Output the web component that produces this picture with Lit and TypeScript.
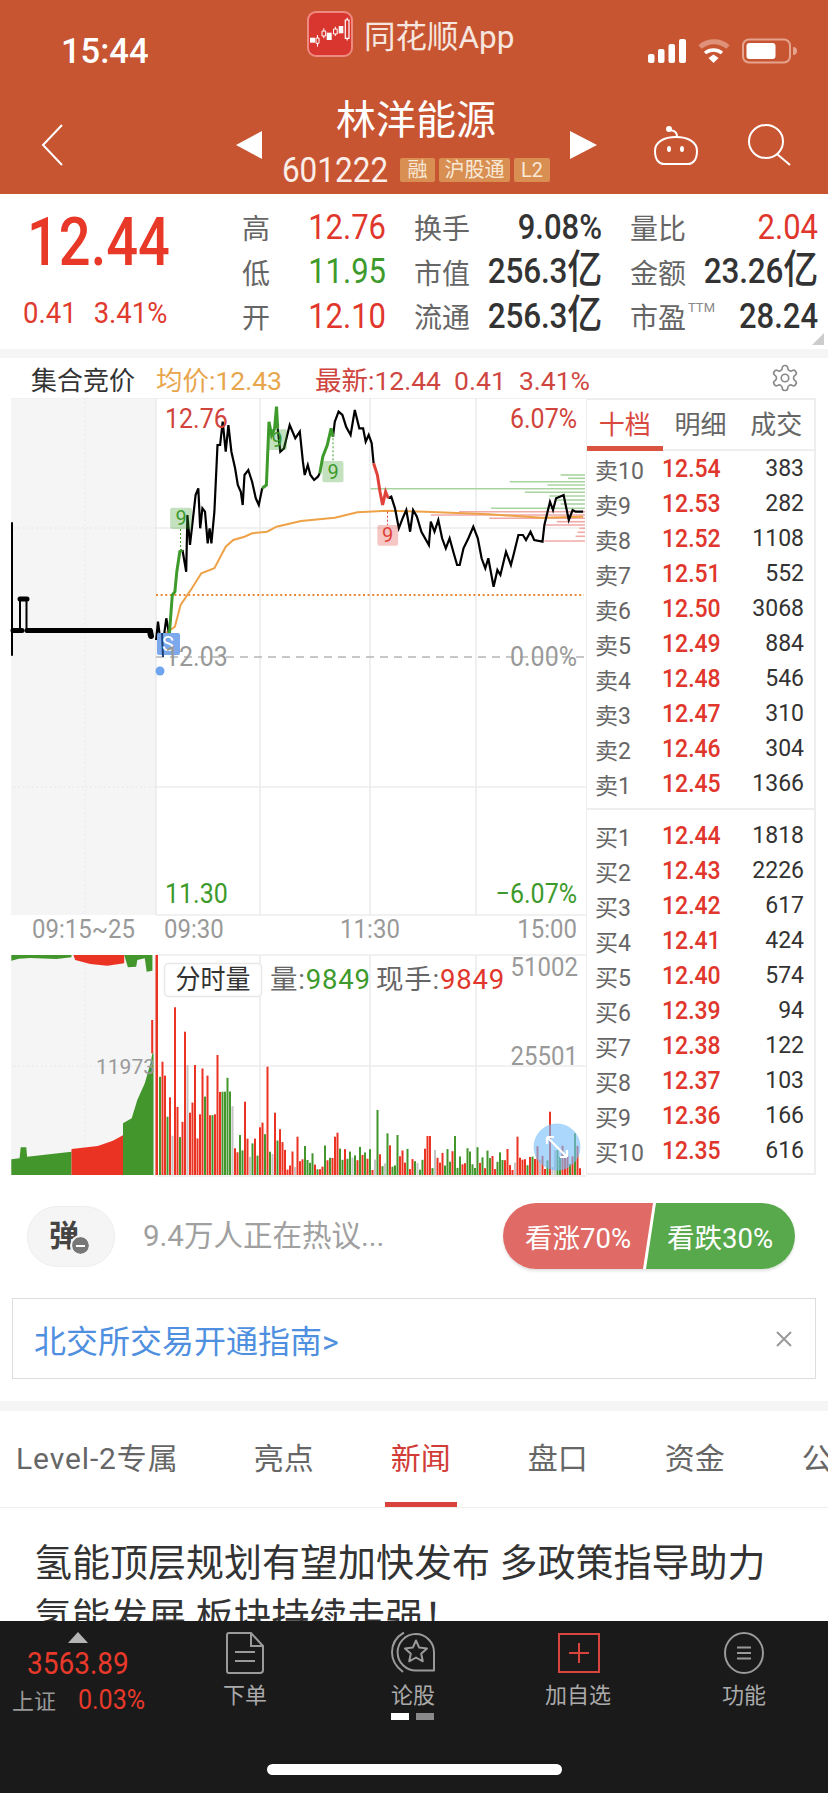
import { LitElement, html, css, svg } from "lit";
import { customElement } from "lit/decorators.js";

const X = (z: number) => +(z / 2.658).toFixed(1);
const Y1 = (z: number) => +(395 + z / 3).toFixed(1);
const Y2 = (z: number) => +(950 + z / 3).toFixed(1);
const pts = (a: number[][]) => a.map(([x, y]) => `${X(x)},${Y1(y)}`).join(" ");

const lineA = [[415,735],[420,680],[430,770],[442,670],[450,720]];
const green1 = [[450,720],[458,600],[465,590],[470,530],[478,470],[485,465]];
const lineB = [[485,465],[495,530],[498,360],[505,450],[520,300],[527,280],[532,400],[538,340],[545,350],[552,445],[557,400],[562,445],[570,350],[578,150],[585,150],[592,80],[600,170],[607,90],[615,170],[625,220],[632,270],[640,290],[645,330],[650,240],[660,225],[670,260],[680,310],[688,330],[697,280]];
const green2 = [[697,280],[708,270],[715,80],[722,120],[730,100],[735,35],[738,100]];
const lineC = [[738,100],[745,170],[755,160],[770,90],[785,130],[797,110],[805,200],[810,240],[818,210],[825,240],[835,255],[845,245],[850,235]];
const green3 = [[850,235],[858,185],[870,150],[880,100],[885,125]];
const lineD = [[885,125],[890,80],[900,50],[910,60],[920,95],[932,120],[943,45],[955,100],[965,100],[972,140],[980,120],[988,145],[993,205]];
const red1 = [[993,205],[1003,240],[1010,290],[1017,330],[1025,290],[1032,310]];
const lineE = [[1032,310],[1040,305],[1050,340],[1060,400],[1070,370],[1080,345],[1090,410],[1098,345],[1108,365],[1120,410],[1140,450],[1145,380],[1155,410],[1165,375],[1175,430],[1185,460],[1195,430],[1205,470],[1215,510],[1222,510],[1232,460],[1245,430],[1258,395],[1270,430],[1280,490],[1290,520],[1298,490],[1312,575],[1322,525],[1330,540],[1345,470],[1358,510],[1365,480],[1378,420],[1390,420],[1398,435],[1410,410],[1420,435],[1442,440],[1447,390],[1462,320],[1470,345],[1478,310],[1488,305],[1498,300],[1512,375],[1522,345],[1530,350],[1550,350]];
const avg = [[440,715],[465,695],[480,630],[510,580],[535,535],[570,520],[600,455],[620,435],[650,425],[670,415],[710,410],[735,395],[800,378],[890,368],[950,352],[1030,347],[1130,350],[1300,358],[1440,368],[1550,365]];
const depth: [number, number, string][] = [[240,1490,"g"],[250,1510,"g"],[260,1355,"g"],[270,1455,"g"],[281,985,"g"],[292,1395,"g"],[303,1460,"g"],[315,1480,"g"],[327,1490,"g"],[340,1305,"g"],[350,1220,"r"],[360,1145,"r"],[370,1300,"r"],[380,1480,"r"],[390,1450,"r"],[400,1540,"r"],[412,1535,"r"],[424,1530,"r"],[438,1447,"r"]];

const peaks: [number, number, string][] = [[432,335,"r"],[465,172,"r"],[490,245,"r"],[498,345,"x"],[517,345,"r"],[575,315,"r"],[587,320,"r"],[592,425,"g"],[650,455,"r"],[710,350,"r"],[727,488,"r"],[790,560,"r"],[885,560,"r"],[895,548,"r"],[1000,480,"g"],[1025,550,"g"],[1055,555,"g"],[1137,558,"r"],[1205,558,"g"],[1370,560,"r"],[1460,485,"r"],[1525,550,"g"],[1545,548,"g"]];

function makeBars() {
  let s = 17;
  const rnd = () => { s = (s * 9301 + 49297) % 233280; return s / 233280; };
  const out: { x: number; y: number; c: string }[] = [];
  for (let i = 0; i < 169; i++) {
    const x = 159 + i * 2.5;
    const zx = x * 2.658;
    const r = rnd(), k = rnd();
    let h = zx < 620 ? 90 + r * 230 : zx < 760 ? 50 + r * 110 : 15 + r * 75;
    let c = k < 0.45 ? "#ea3323" : k < 0.92 ? "#43962c" : "#c4c4c4";
    let t = 675 - h;
    for (const p of peaks) if (Math.abs(p[0] - zx) < 3.4) { t = p[1]; c = p[2] === "r" ? "#ea3323" : p[2] === "g" ? "#43962c" : "#c4c4c4"; }
    out.push({ x, y: Y2(t), c });
  }
  return out;
}
const bars = makeBars();

const sells = [["卖10","12.54","383"],["卖9","12.53","282"],["卖8","12.52","1108"],["卖7","12.51","552"],["卖6","12.50","3068"],["卖5","12.49","884"],["卖4","12.48","546"],["卖3","12.47","310"],["卖2","12.46","304"],["卖1","12.45","1366"]];
const buys = [["买1","12.44","1818"],["买2","12.43","2226"],["买3","12.42","617"],["买4","12.41","424"],["买5","12.40","574"],["买6","12.39","94"],["买7","12.38","122"],["买8","12.37","103"],["买9","12.36","166"],["买10","12.35","616"]];

const tx = (x: number, cy: number, t: string, cls: string, anchor = "start") =>
  svg`<text x=${x} y=${cy} class=${cls} text-anchor=${anchor} dominant-baseline="central">${t}</text>`;
const mark = (zx0: number, zy0: number, zx1: number, zy1: number, bg: string, fg: string, t: string, lx: number, ly: number, ly2: number) => svg`
  <line x1=${X(lx)} y1=${Y1(ly)} x2=${X(lx)} y2=${Y1(ly2)} stroke=${fg} stroke-width="1" stroke-dasharray="2 2"></line>
  <rect x=${X(zx0)} y=${Y1(zy0)} width=${X(zx1 - zx0)} height=${(zy1 - zy0) / 3} rx="2" fill=${bg}></rect>
  <text x=${X((zx0 + zx1) / 2)} y=${Y1((zy0 + zy1) / 2)} fill=${fg} class="mk" text-anchor="middle" dominant-baseline="central">${t}</text>`;

@customElement("app-root")
export class AppRoot extends LitElement {
  static styles = css`
    :host { display: block; width: 828px; height: 1793px; overflow: hidden; background: #fff;
      font-family: Roboto, "Noto Sans CJK SC", sans-serif; color: #333; }
    .page { display: flex; flex-direction: column; height: 1793px; }
    .header { height: 194px; background: #c85532; color: #fff; flex: none; }
    .status { display: flex; height: 72px; padding-left: 61px; }
    .time { margin-top: 33px; font-size: 34.5px; font-weight: 500; line-height: 36px; width: 89px; white-space: nowrap; }
    .app { display: flex; align-items: center; gap: 11px; margin: 11px 0 0 157px; height: 46px; }
    .app span { font-size: 31.5px; color: #f6e6df; margin-top: -1px; }
    .sys { margin: 37px 0 0 auto; padding-right: 30px; display: flex; }
    .nav { display: flex; align-items: center; height: 122px; padding: 24px 0 0 41px; box-sizing: border-box; }
    .tl { margin-left: 173px; }
    .mid { width: 308px; display: flex; flex-direction: column; align-items: center; }
    .name { font-size: 40px; line-height: 50px; font-weight: 400; }
    .sub { display: flex; align-items: center; height: 48px; }
    .code { font-size: 31.5px; transform: scaleY(1.1); margin-right: 12px; color: #fbeee9; }
    .tag { height: 24px; line-height: 24px; background: #d98e52; color: #f8e9d6; font-size: 20px; border-radius: 2px; text-align: center; margin-right: 4px; }
    .tag.a { width: 35px; } .tag.b { width: 71px; } .tag.c { width: 36px; margin-right: 0; }
    .robot { margin-left: 56px; } .search { margin-left: 49px; }

    .quote { flex: none; height: 155px; box-sizing: border-box; display: flex; position: relative; }
    .corner { position: absolute; right: 4px; bottom: 4px; width: 0; height: 0; border-left: 12px solid transparent; border-bottom: 12px solid #ccc; }
    .left { width: 242px; flex: none; position: relative; }
    .price { position: absolute; left: 27px; top: 10px; font-size: 56px; font-weight: 500; color: #e83828; line-height: 78px; transform: scaleY(1.18); }
    .chg { position: absolute; left: 23px; top: 102px; font-size: 27.5px; color: #e03a2e; line-height: 34px; display: flex; gap: 17px; transform: scaleY(1.08); }
    .stats { display: grid; grid-template-columns: 144px 188px 188px; column-gap: 28px; grid-auto-rows: 44.5px; padding-top: 11px; }
    .cell { display: flex; justify-content: space-between; align-items: center; }
    .lb { font-size: 28px; color: #666; white-space: nowrap; }
    .lb sup { font-size: 13px; font-family: Roboto; color: #888; vertical-align: 16px; line-height: 0; margin-left: 2px; }
    .val { font-size: 31px; display: inline-block; transform: scaleY(1.13); white-space: nowrap; }
    .val.r { color: #e0362c; } .val.g { color: #3d9a2b; } .val.k { color: #333; font-weight: 500; }
    .val.w { font-size: 31.5px; letter-spacing: -.2px; }
    .val small { font-size: 35px; font-family: "Noto Sans CJK SC"; font-weight: 500; line-height: 0; }
    .strip { flex: none; height: 9px; background: #f5f5f5; }
    .ctitle { flex: none; height: 40px; display: flex; align-items: center; padding-left: 31px; font-size: 26.5px; position: relative; white-space: nowrap; }
    .ctitle .t1 { width: 125px; color: #333; font-size: 26px; }
    .ctitle .t2 { width: 159px; color: #e8a64c; }
    .ctitle .t3 { color: #cf4640; }
    .gear { position: absolute; left: 770px; top: 5px; }

    .charts { flex: none; height: 777px; display: flex; }
    .plot { width: 586px; height: 782px; flex: none; }
    .plot text { font-family: Roboto, "Noto Sans CJK SC", sans-serif; }
    .p25, .p24 { transform-box: fill-box; transform-origin: center; transform: scaleY(1.1); }
    .p25 { font-size: 25px; } .p24 { font-size: 24px; } .p21 { font-size: 21px; } .p28 { font-size: 27.5px; letter-spacing: .8px; }
    .fr { fill: #d0443c; } .fg { fill: #3d9a2b; } .fa { fill: #999; } .fh { fill: #333; } .fs { fill: #666; } .fn { fill: #e0362c; }
    .mk { font-size: 20px; }
    .book { width: 230px; box-sizing: border-box; border: 2px solid #eee; border-left: 1px solid #eee; flex: none; display: flex; flex-direction: column; height: 777px; }
    .btabs { display: flex; height: 49px; border-bottom: 2px solid #eee; flex: none; }
    .btabs div { flex: 1; text-align: center; font-size: 26px; line-height: 50px; color: #666; position: relative; }
    .btabs .on { color: #d9483e; }
    .btabs .on::after { content: ""; position: absolute; left: 0; right: 0; bottom: -2px; height: 5px; background: #d9533f; }
    .rows { display: flex; flex-direction: column; }
    .row { height: 35px; display: grid; grid-template-columns: 67px 70px 72px; padding-left: 8px; align-items: center; }
    .row .a { font-size: 23px; color: #666; white-space: nowrap; }
    .row .b { font-size: 23px; font-weight: 500; color: #e0362c; display: inline-block; transform: scaleY(1.1); }
    .row .c { font-size: 23px; color: #333; text-align: right; display: inline-block; transform: scaleY(1.06); }
    .sep { height: 9px; border-bottom: 2px solid #eee; flex: none; margin-bottom: 8px; box-sizing: border-box; }

    .senti { flex: none; height: 95px; display: flex; padding-top: 28px; box-sizing: border-box; position: relative; }
    .dan { margin: 3px 0 0 27px; width: 88px; height: 61px; background: #f5f5f5; border: 1px solid #eee; border-radius: 30px; box-sizing: border-box; position: relative; display: flex; align-items: center; justify-content: center; }
    .dan b { font-size: 30px; color: #444; margin: -8px 14px 0 0; }
    .dan i { position: absolute; left: 44px; top: 30px; width: 17px; height: 17px; box-sizing: border-box; border-radius: 50%; background: #777; outline: 2px solid #f5f5f5; display: flex; align-items: center; justify-content: center; }
    .dan i::before { content: ""; width: 9px; height: 2px; background: #fff; }
    .hot { margin: 13px 0 0 28px; width: 360px; font-size: 29.5px; line-height: 40px; color: #a0a0a0; white-space: nowrap; }
    .pill { position: absolute; left: 503px; top: 28px; width: 292px; height: 66px; border-radius: 33px; overflow: hidden; display: flex; box-shadow: 0 2px 3px rgba(0,0,0,.12); }
    .pill span { display: flex; align-items: center; justify-content: center; color: #fff; font-size: 27.5px; white-space: nowrap; }
    .up { width: 150px; flex: none; background: #e06a65; clip-path: polygon(0 0, 100% 0, 140px 100%, 0 100%); }
    .down { width: 150px; flex: none; margin-left: -8px; background: #58a94c; clip-path: polygon(11px 0, 100% 0, 100% 100%, 1px 100%); }
    .banner { flex: none; margin: 28px 12px 0; height: 81px; box-sizing: border-box; border: 1px solid #ddd; display: flex; align-items: center; justify-content: space-between; padding: 0 22px 0 21px; }
    .banner span { font-size: 32px; color: #4f8fdf; }
    .strip2 { flex: none; height: 10px; margin-top: 22px; background: #f5f5f5; }
    .tabs { flex: none; height: 97px; display: flex; gap: 77px; padding-left: 16px; border-bottom: 1px solid #eee; box-sizing: border-box; overflow: hidden; }
    .tabs div { font-size: 30px; line-height: 96px; color: #666; white-space: nowrap; position: relative; flex: none; }
    .tabs .lv { letter-spacing: .9px; margin-right: -2px; }
    .tabs .on { color: #d23c36; }
    .tabs .on::after { content: ""; position: absolute; left: -6px; right: -6px; bottom: 0; height: 5px; background: #d9433b; }
    .article { flex: 1; min-height: 0; overflow: hidden; padding: 28px 0 0 34px; font-size: 38px; line-height: 54px; color: #333; white-space: nowrap; }

    .bar { flex: none; height: 172px; background: #1a1a1a; display: grid; grid-template-columns: 160px 170px 166px 164px 168px; position: relative; }
    .idx { display: flex; flex-direction: column; align-items: flex-start; padding: 11px 0 0 12px; }
    .tri { width: 0; height: 0; border-left: 10px solid transparent; border-right: 10px solid transparent; border-bottom: 11px solid #b5b5b5; margin-left: 56px; }
    .ip { font-size: 28px; color: #e8392a; line-height: 32px; margin: 5px 0 0 15px; transform: scaleY(1.1); }
    .il { display: flex; align-items: center; margin-top: 3px; width: 133px; justify-content: space-between; }
    .il span { font-size: 22px; color: #999; }
    .il em { font-style: normal; font-size: 25px; color: #e8392a; transform: scaleY(1.12); }
    .it { display: flex; flex-direction: column; align-items: center; padding-top: 11px; }
    .it svg { display: block; }
    .it span { font-size: 22px; line-height: 30px; color: #aaa; margin-top: 7px; white-space: nowrap; }
    .plus { margin-left: 2px; }
    .dots { position: absolute; left: 391px; top: 92px; display: flex; gap: 7px; }
    .dots i { width: 18px; height: 7px; background: #fff; }
    .dots i + i { background: #8a8a8a; }
    .home { position: absolute; left: 267px; top: 143px; width: 295px; height: 11px; border-radius: 6px; background: #fff; }
  `;

  private renderPlot() {
    const grid = "#ececec";
    return svg`
      <svg class="plot" width="586" height="782" viewBox="0 398 586 782">
        <rect x="11" y="398" width="145" height="517" fill="#f5f5f5"></rect>
        <rect x="11" y="955" width="145" height="220" fill="#f5f5f5"></rect>
        <line x1="85" x2="85" y1="398" y2="915" stroke="#e6e6e6" stroke-dasharray="1.5 3"></line>
        <line x1="85" x2="85" y1="955" y2="1175" stroke="#e6e6e6" stroke-dasharray="1.5 3"></line>
        ${[528, 787, 1066].map((y) => svg`<line x1="14" x2="156" y1=${y} y2=${y} stroke="#e2e2e2" stroke-dasharray="1.5 3"></line>`)}
        ${[398, 528, 787, 915, 955, 1066, 1176].map((y) => svg`<line x1="156" x2="586" y1=${y} y2=${y} stroke=${grid} stroke-width="1.6"></line>`)}
        ${[156, 260, 370, 476].map((x) => svg`<line x1=${x} x2=${x} y1="398" y2="915" stroke=${grid} stroke-width="1.6"></line><line x1=${x} x2=${x} y1="955" y2="1176" stroke=${grid} stroke-width="1.6"></line>`)}
        <line x1="11" x2="156" y1="398" y2="398" stroke=${grid}></line>

        ${depth.map(([y, x, c]) => svg`<line x1=${X(x)} x2="585" y1=${Y1(y)} y2=${Y1(y)} stroke=${c === "g" ? "#a9d4a0" : "#efa9a7"} stroke-width="1.6"></line>`)}
        <line x1="156" x2="584" y1=${Y1(600)} y2=${Y1(600)} stroke="#e8893c" stroke-width="2" stroke-dasharray="2 2.6"></line>
        <line x1="156" x2="586" y1="657" y2="657" stroke="#b5b5b5" stroke-width="1.5" stroke-dasharray="8 6"></line>

        <g stroke="#000" fill="none" stroke-linecap="round">
          <line x1="12" x2="12" y1="523" y2="655" stroke-width="2"></line>
          <line x1="13" x2="22" y1="630.5" y2="630.5" stroke-width="5"></line>
          <line x1="27" x2="150" y1="630.5" y2="630.5" stroke-width="5"></line>
          <line x1="20" x2="20" y1="600" y2="630" stroke-width="2"></line>
          <line x1="26.5" x2="26.5" y1="600" y2="630" stroke-width="2"></line>
          <line x1="20" x2="27" y1="599" y2="599" stroke-width="5"></line>
          <line x1="150" x2="151" y1="631" y2="636" stroke-width="6"></line>
        </g>
        <polyline points=${pts(avg)} fill="none" stroke="#eea247" stroke-width="2"></polyline>
        ${[lineA, lineB, lineC, lineD, lineE].map((l) => svg`<polyline points=${pts(l)} fill="none" stroke="#000" stroke-width="2.2"></polyline>`)}
        ${[green1, green2, green3].map((l) => svg`<polyline points=${pts(l)} fill="none" stroke="#3d9a2b" stroke-width="3"></polyline>`)}
        <polyline points=${pts(red1)} fill="none" stroke="#e0423a" stroke-width="3"></polyline>

        ${mark(452,338,510,402,"rgba(61,154,43,.3)","#3d9a2b","9",480,402,465)}
        ${mark(710,103,763,165,"rgba(61,154,43,.3)","#3d9a2b","9",736,103,103)}
        ${mark(857,198,913,262,"rgba(61,154,43,.3)","#3d9a2b","9",885,130,198)}
        ${mark(1003,390,1058,452,"rgba(224,66,58,.3)","#e0423a","9",1030,350,390)}
        <rect x="157" y="633" width="23" height="22" rx="2" fill="#7ba9ec"></rect>
        <line x1="162" y1="633" x2="163" y2="657" stroke="#1d3f78" stroke-width="2"></line>
        <text x="168" y="644" class="mk" fill="#fff" text-anchor="middle" dominant-baseline="central">S</text>
        <circle cx="160" cy="671" r="4.5" fill="#6fa5ee"></circle>

        ${tx(165, 419, "12.76", "p25 fr")}
        ${tx(577, 419, "6.07%", "p25 fr", "end")}
        ${tx(165, 657, "12.03", "p25 fa")}
        ${tx(577, 657, "0.00%", "p25 fa", "end")}
        ${tx(165, 894, "11.30", "p25 fg")}
        ${tx(577, 894, "−6.07%", "p25 fg", "end")}
        ${tx(32, 929, "09:15~25", "p24 fa")}
        ${tx(164, 929, "09:30", "p24 fa")}
        ${tx(370, 929, "11:30", "p24 fa", "middle")}
        ${tx(577, 929, "15:00", "p24 fa", "end")}

        <polygon points=${[[30,675],[30,628],[52,625],[55,592],[70,592],[72,620],[190,605],[190,675]].map(([x,y])=>`${X(x)},${Y2(y)}`).join(" ")} fill="#43962c"></polygon>
        <polygon points=${[[190,675],[190,597],[260,588],[300,572],[327,556],[327,675]].map(([x,y])=>`${X(x)},${Y2(y)}`).join(" ")} fill="#ea3323"></polygon>
        <polygon points=${[[327,675],[327,520],[350,505],[365,450],[385,400],[400,340],[405,310],[408,310],[408,675]].map(([x,y])=>`${X(x)},${Y2(y)}`).join(" ")} fill="#43962c"></polygon>
        <rect x=${X(402)} y=${Y2(210)} width="2" height=${(310-210)/3} fill="#ea3323"></rect>
        <polygon points=${[[30,15],[190,15],[190,22],[150,27],[80,24],[50,26],[30,32]].map(([x,y])=>`${X(x)},${Y2(y)}`).join(" ")} fill="#43962c"></polygon>
        <polygon points=${[[195,15],[330,15],[330,40],[285,47],[240,42],[200,30]].map(([x,y])=>`${X(x)},${Y2(y)}`).join(" ")} fill="#ea3323"></polygon>
        <polygon points=${[[330,15],[405,15],[405,62],[390,65],[385,25],[365,30],[362,50],[340,52]].map(([x,y])=>`${X(x)},${Y2(y)}`).join(" ")} fill="#43962c"></polygon>
        <rect x="155.5" y="955" width="2.5" height="220" fill="#ea3323"></rect>
        ${bars.map((b) => svg`<rect x=${b.x} y=${b.y} width="2" height=${1175 - b.y} fill=${b.c}></rect>`)}
        <circle cx="557" cy="1147" r="23.5" fill="rgba(120,190,250,.62)"></circle>
        <path d="M547 1137l20 20M547 1137h7M547 1137v7M567 1157h-7M567 1157v-7" stroke="#fff" stroke-width="2.2" fill="none"></path>

        ${tx(96, 1067, "11973", "p21 fa")}
        ${tx(578, 967, "51002", "p24 fa", "end")}
        ${tx(578, 1056, "25501", "p24 fa", "end")}
        <rect x="164.5" y="963.5" width="97" height="33" rx="4" fill="#fff" stroke="#e8e8e8" stroke-width="1.5"></rect>
        ${tx(213, 980, "分时量", "p25 fh", "middle")}
        <text x="270" y="979" class="p28" dominant-baseline="central"><tspan class="fs">量:</tspan><tspan class="fg">9849</tspan></text>
        <text x="376" y="979" class="p28" dominant-baseline="central"><tspan class="fs">现手:</tspan><tspan class="fn">9849</tspan></text>
      </svg>`;
  }

  private row(r: string[]) {
    return html`<div class="row"><span class="a">${r[0]}</span><span class="b">${r[1]}</span><span class="c">${r[2]}</span></div>`;
  }

  render() {
    return html`<div class="page">
      <div class="header">
        <div class="status">
          <div class="time">15:44</div>
          <div class="app">
            <svg width="46" height="46" viewBox="0 0 46 46">
              <rect x="1" y="1" width="44" height="44" rx="8" fill="#d9362f" stroke="#ee8a80" stroke-width="2"></rect>
              <g fill="#fff">
                <rect x="3" y="26.7" width="5" height="5"></rect>
                <rect x="19.7" y="21.7" width="5" height="7.3"></rect>
                <rect x="31.7" y="15" width="4.600" height="7.3"></rect>
              </g>
              <g stroke="#fff" stroke-width="1" fill="none">
                <path d="M9 27h3v5.300H9zM10.500 24v3M10.500 32.300v3.400"></path>
                <path d="M15 20h3.700v5H15zM16.800 17.300V20M16.800 25v2.300"></path>
                <path d="M26.500 18h3.700v5h-3.700zM28.300 15.700V18M28.300 23v2"></path>
                <path d="M38.300 9h3.700v18.300h-3.700zM40.200 6.700V9M40.200 27.300V29.500" stroke-width="1.200"></path>
              </g>
            </svg>
            <span>同花顺App</span>
          </div>
          <div class="sys">
            <svg width="150" height="28" viewBox="648 37 150 28">
              <g fill="#fff"><rect x="648" y="54" width="6.500" height="9" rx="2"></rect><rect x="658" y="49" width="6.500" height="14" rx="2"></rect><rect x="668.500" y="44" width="6.500" height="19" rx="2"></rect><rect x="679" y="39" width="7" height="24" rx="2"></rect></g>
              <path d="M700 47a21 21 0 0 1 28 0" fill="none" stroke="#e0917a" stroke-width="5"></path>
              <path d="M705 53a13.500 13.500 0 0 1 17 0" fill="none" stroke="#fff" stroke-width="3.500"></path>
              <path d="M708.500 58l5-3.500 5 3.500-5 5z" fill="#fff"></path>
              <rect x="743" y="39.500" width="47" height="23" rx="6" fill="none" stroke="#e5a48d" stroke-width="2"></rect>
              <rect x="746.500" y="43" width="29" height="16" rx="3" fill="#fff"></rect>
              <path d="M793 47a3.500 3.500 0 0 1 0 8z" fill="#e5a48d"></path>
            </svg>
          </div>
        </div>
        <div class="nav">
          <svg width="22" height="42" viewBox="0 0 22 42"><path d="M21 1L2 21l19 20" fill="none" stroke="#fff" stroke-width="2"></path></svg>
          <svg class="tl" width="26" height="28" viewBox="0 0 26 28"><path d="M26 0v28L0 14z" fill="#fff"></path></svg>
          <div class="mid">
            <div class="name">林洋能源</div>
            <div class="sub"><span class="code">601222</span><span class="tag a">融</span><span class="tag b">沪股通</span><span class="tag c">L2</span></div>
          </div>
          <svg width="27" height="28" viewBox="0 0 27 28"><path d="M0 0v28l27-14z" fill="#fff"></path></svg>
          <svg class="robot" width="46" height="42" viewBox="0 0 46 42">
            <path d="M2 27c0-9 9-14 21-14s21 5 21 14c0 10-5 13-9 13H11c-4 0-9-3-9-13z" fill="none" stroke="#fff" stroke-width="2"></path>
            <path d="M24 13c0-4-1-6-7-7" fill="none" stroke="#fff" stroke-width="2"></path><circle cx="16" cy="5" r="3" fill="#fff"></circle>
            <ellipse cx="16" cy="25" rx="2" ry="3" fill="#fff"></ellipse><ellipse cx="29" cy="25" rx="2" ry="3" fill="#fff"></ellipse>
          </svg>
          <svg class="search" width="43" height="42" viewBox="0 0 43 42"><ellipse cx="18" cy="17.500" rx="17" ry="16.500" fill="none" stroke="#fff" stroke-width="2"></ellipse><path d="M29 30l13 11" stroke="#fff" stroke-width="2"></path></svg>
        </div>
      </div>

      <div class="quote">
        <div class="left">
          <div class="price">12.44</div>
          <div class="chg"><span>0.41</span><span>3.41%</span></div>
        </div>
        <div class="stats">
          <div class="cell"><span class="lb">高</span><span class="val r">12.76</span></div>
          <div class="cell"><span class="lb">换手</span><span class="val k">9.08%</span></div>
          <div class="cell"><span class="lb">量比</span><span class="val r">2.04</span></div>
          <div class="cell"><span class="lb">低</span><span class="val g">11.95</span></div>
          <div class="cell"><span class="lb">市值</span><span class="val k w">256.3<small>亿</small></span></div>
          <div class="cell"><span class="lb">金额</span><span class="val k w">23.26<small>亿</small></span></div>
          <div class="cell"><span class="lb">开</span><span class="val r">12.10</span></div>
          <div class="cell"><span class="lb">流通</span><span class="val k w">256.3<small>亿</small></span></div>
          <div class="cell"><span class="lb">市盈<sup>TTM</sup></span><span class="val k">28.24</span></div>
        </div>
        <div class="corner"></div>
      </div>
      <div class="strip"></div>
      <div class="ctitle">
        <span class="t1">集合竞价</span><span class="t2">均价:12.43</span><span class="t3">最新:12.44&nbsp;&nbsp;0.41&nbsp;&nbsp;3.41%</span>
        <svg class="gear" width="30" height="30" viewBox="0 0 24 24" fill="none" stroke="#888" stroke-width="1.3">
          <path d="M12.22 2h-.44a2 2 0 0 0-2 2v.18a2 2 0 0 1-1 1.73l-.43.25a2 2 0 0 1-2 0l-.15-.08a2 2 0 0 0-2.73.73l-.22.38a2 2 0 0 0 .73 2.73l.15.1a2 2 0 0 1 1 1.72v.51a2 2 0 0 1-1 1.74l-.15.09a2 2 0 0 0-.73 2.73l.22.38a2 2 0 0 0 2.73.73l.15-.08a2 2 0 0 1 2 0l.43.25a2 2 0 0 1 1 1.73V20a2 2 0 0 0 2 2h.44a2 2 0 0 0 2-2v-.18a2 2 0 0 1 1-1.73l.43-.25a2 2 0 0 1 2 0l.15.08a2 2 0 0 0 2.73-.73l.22-.39a2 2 0 0 0-.73-2.73l-.15-.08a2 2 0 0 1-1-1.74v-.5a2 2 0 0 1 1-1.74l.15-.09a2 2 0 0 0 .73-2.73l-.22-.38a2 2 0 0 0-2.73-.73l-.15.08a2 2 0 0 1-2 0l-.43-.25a2 2 0 0 1-1-1.73V4a2 2 0 0 0-2-2z"></path><circle cx="12" cy="12" r="3"></circle>
        </svg>
      </div>

      <div class="charts">
        ${this.renderPlot()}
        <div class="book">
          <div class="btabs"><div class="on">十档</div><div>明细</div><div>成交</div></div>
          <div class="rows">${sells.map((r) => this.row(r))}</div>
          <div class="sep"></div>
          <div class="rows">${buys.map((r) => this.row(r))}</div>
        </div>
      </div>

      <div class="senti">
        <div class="dan"><b>弹</b><i></i></div>
        <div class="hot">9.4万人正在热议...</div>
        <div class="pill"><span class="up">看涨70%</span><span class="down">看跌30%</span></div>
      </div>
      <div class="banner"><span>北交所交易开通指南&gt;</span>
        <svg width="18" height="18" viewBox="0 0 18 18"><path d="M2 2l14 14M16 2L2 16" stroke="#999" stroke-width="2"></path></svg>
      </div>
      <div class="strip2"></div>
      <div class="tabs"><div class="lv">Level-2专属</div><div>亮点</div><div class="on">新闻</div><div>盘口</div><div>资金</div><div>公告</div></div>
      <div class="article">氢能顶层规划有望加快发布 多政策指导助力<br />氢能发展 板块持续走强！</div>

      <div class="bar">
        <div class="idx">
          <div class="tri"></div>
          <div class="ip">3563.89</div>
          <div class="il"><span>上证</span><em>0.03%</em></div>
        </div>
        <div class="it">
          <svg width="38" height="42" viewBox="0 0 38 42" fill="none" stroke="#9a9a9a" stroke-width="2"><path d="M3 1h22l12 13v24a3 3 0 0 1-3 3H3a2 2 0 0 1-2-2V3a2 2 0 0 1 2-2zM25 1v13h12"></path><path d="M9 20h20M9 29h20"></path></svg>
          <span>下单</span>
        </div>
        <div class="it">
          <svg width="44" height="42" viewBox="0 0 44 42" fill="none" stroke="#9a9a9a" stroke-width="2" stroke-linejoin="round">
            <path d="M13 .5C3 6 1 14 1 20.500S4 34 12 40"></path>
            <path d="M43 38.500H25.500A18.200 18.200 0 1 1 43 20.500Z"></path>
            <path d="M25 8.500l3.200 7.100 7.800.8-5.800 5.300 1.600 7.600-6.800-3.800-6.800 3.800 1.600-7.600-5.800-5.300 7.800-.8z"></path>
          </svg>
          <span>论股</span>
        </div>
        <div class="it">
          <svg class="plus" width="42" height="42" viewBox="0 0 42 42" fill="none" stroke="#d8453c" stroke-width="2"><rect x="1" y="2" width="40" height="38"></rect><path d="M21 11v20M11 21h20"></path></svg>
          <span>加自选</span>
        </div>
        <div class="it">
          <svg width="42" height="42" viewBox="0 0 42 42" fill="none" stroke="#9a9a9a" stroke-width="2"><ellipse cx="21" cy="21" rx="19" ry="20"></ellipse><path d="M14 15.500h14M14 21h14M14 26.500h14" stroke-width="2.200"></path></svg>
          <span>功能</span>
        </div>
        <div class="dots"><i></i><i></i></div>
        <div class="home"></div>
      </div>
    </div>`;
  }
}
